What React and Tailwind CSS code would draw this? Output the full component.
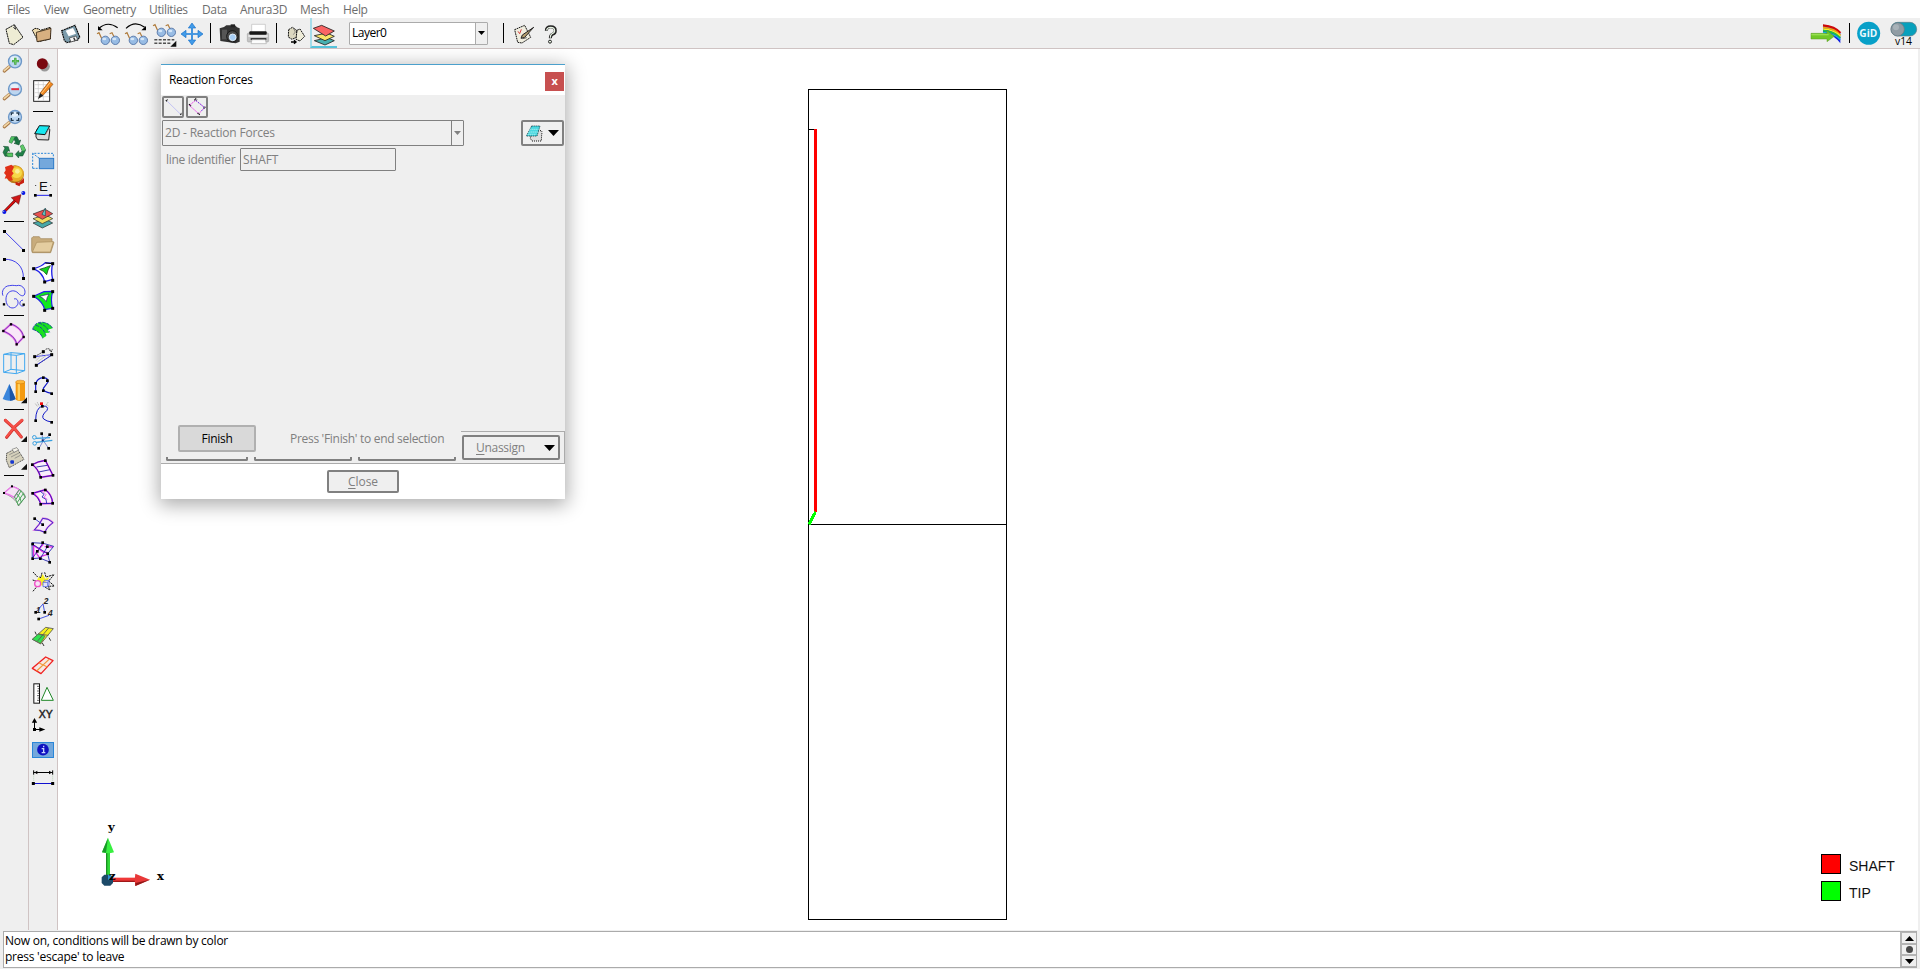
import React from "react";

/* Icon artwork is drawn on a grid with three units per pixel. */
function Cell({ ox = 0, oy = 0, x, y, w = 28, h = 28, children }) {
  return (
    <svg
      width={w}
      height={h}
      viewBox={`${(x - ox) * 3} ${(y - oy) * 3} ${w * 3} ${h * 3}`}
      className="block shrink-0"
      fill="none"
    >
      {children}
    </svg>
  );
}

const Dots = ({ p, s = 8, c = "#000" }) => (
  <>
    {p.map(([x, y], i) => (
      <rect key={i} x={x - s / 2} y={y - s / 2} width={s} height={s} fill={c} />
    ))}
  </>
);

const HRule = ({ className }) => (
  <div className={`flex shrink-0 items-start justify-center ${className}`}>
    <div className="h-px w-5 bg-black" />
  </div>
);
const VRule = ({ className = "" }) => <div className={`h-5 w-px shrink-0 bg-black ${className}`} />;

const BLUE = "#2020e8";

function Lens({ cy, children }) {
  return (
    <>
      <path d={`M13 ${cy + 29} L27 ${cy + 17}`} stroke="#a87848" strokeWidth="10" strokeLinecap="round" />
      <path d={`M13 ${cy + 28} L27 ${cy + 16}`} stroke="#f3d9a8" strokeWidth="5" strokeLinecap="round" />
      <circle cx="45" cy={cy} r="19.5" fill="#bcd6f0" stroke="#6d98c8" strokeWidth="4" />
      <ellipse cx="43" cy={cy - 8} rx="12" ry="7" fill="#e4f0fa" />
      {children}
    </>
  );
}

const Corner = ({ x, y }) => (
  <path d={`M${x} ${y} v-18 l-18 18z`} fill="#111" />
);

function LeftColumn() {
  return (
    <div className="flex w-7 shrink-0 flex-col bg-[#efefef]">
      <Cell oy={45} x={0} y={49}>
        <Lens cy={49}>
          <path d="M46 38v21M36 48.500h21" stroke="#3fa33f" strokeWidth="7" />
          <path d="M46 40v17M38 48.500h17" stroke="#7cd070" strokeWidth="2.500" />
        </Lens>
      </Cell>
      <Cell oy={45} x={0} y={77}>
        <Lens cy={132}><path d="M34 132.500h23" stroke="#e03040" strokeWidth="6" /></Lens>
      </Cell>
      <Cell oy={45} x={0} y={105}>
        <Lens cy={216}>
          <path d="M34 211v-7h7M49 204h7v7M56 219v7h-7M41 226h-7v-7" stroke="#20384f" strokeWidth="4" />
        </Lens>
      </Cell>
      <Cell oy={45} x={0} y={133}>
        <path d="M27 291l7-16h17l6 12 5-2-5 15-15-5 5-3-5-9-7 12z" fill="#187040" stroke="#0b4022" strokeWidth="1.500" />
        <path d="M27 291l7-16 10 1-9 19z" fill="#50c060" />
        <path d="M10 304l15 1 4 14-5-2-6 10 4 7h-7l-6-12 6-13z" fill="#208048" stroke="#0b4022" strokeWidth="1.500" />
        <path d="M18 324h20v11H23z" fill="#58c860" stroke="#0b4022" strokeWidth="1.500" />
        <path d="M61 303l8-4 8 16-9 18H56v6l-10-11 10-11v6h7l3-6z" fill="#208048" stroke="#0b4022" strokeWidth="1.500" />
        <path d="M61 303l8-4 8 16-10 3z" fill="#60c868" />
      </Cell>
      <Cell oy={45} x={0} y={161}>
        <circle cx="45" cy="388" r="27" fill="#b87818" />
        <circle cx="47" cy="386" r="24" fill="#e8b028" />
        <circle cx="50" cy="383" r="16" fill="#f6d848" />
        <circle cx="52" cy="379" r="7" fill="#fbee98" />
        <path d="M15 366l19-7 8 6-6 14 5 6-7 9 5 12-11 1-7-7-7 1 4-10-6-7 5-8z" fill="#e03018" />
        <path d="M46 410l10 4 16-15 0 14-12 6-1 5-12-5z" fill="#c82010" />
      </Cell>
      <Cell oy={45} x={0} y={189}>
        <path d="M13 500L50 462" stroke="#500" strokeWidth="8" />
        <path d="M13 500L50 462" stroke="#e01010" strokeWidth="5" />
        <path d="M63 449l-7 29-22-20z" fill="#d01818" stroke="#500" strokeWidth="1.500" />
        <circle cx="13" cy="501" r="6" fill="#0818e8" /><circle cx="70" cy="444" r="6" fill="#0818e8" />
        <circle cx="11" cy="499" r="2" fill="#9ac" /><circle cx="68" cy="442" r="2" fill="#9ac" />
      </Cell>
      <HRule className="h-[9px] pt-1" />
      <Cell oy={225} x={0} y={226}>
        <path d="M13 19L71 76" stroke={BLUE} strokeWidth="2.500" />
        <Dots p={[[13.5, 19.5], [70.500, 76.500]]} s={9} />
      </Cell>
      <Cell oy={225} x={0} y={254}>
        <path d="M13 103C46 101 72 124 70 160" stroke={BLUE} strokeWidth="2.500" />
        <Dots p={[[13.5, 103.500], [70.500, 160.500]]} s={9} />
      </Cell>
      <Cell oy={225} x={0} y={282}>
        <path d="M9 212C3 200 12 183 28 182C40 179 50 184 55 181C70 181 78 196 74 207C70 217 60 211 54 204C44 194 29 196 22 207C15 219 17 237 27 245C38 254 52 246 54 235C55 225 49 219 42 222M69 225C56 226 56 246 71 243" stroke={BLUE} strokeWidth="2.500" />
        <Dots p={[[12, 238]]} s={7} /><Dots p={[[71, 239]]} s={7} />
      </Cell>
      <HRule className="h-[10px] pt-[5px]" />
      <Cell oy={225} x={0} y={320}>
        <path d="M10 318L33 297C50 303 66 314 71 336L50 358C47 338 30 327 10 318Z" stroke="#f06ae8" strokeWidth="6" fill="#f8e8f8" />
        <path d="M10 318L33 297C50 303 66 314 71 336L50 358C47 338 30 327 10 318Z" stroke="#3030a0" strokeWidth="2" />
        <Dots p={[[10, 318], [33, 298], [71, 336], [50, 358]]} s={7} />
      </Cell>
      <Cell oy={225} x={0} y={348} h={29}>
        <path d="M11 388L49 391V446L11 442ZM33 383L74 386V437L33 433ZM11 388L33 383M49 391L74 386M49 446L74 437M11 442L33 433" stroke="#40a8f0" strokeWidth="3" />
      </Cell>
      <Cell oy={225} x={0} y={377}>
        <path d="M28 477L47 522Q28 532 8 522Z" fill="#3a86dc" />
        <path d="M28 477L47 522Q38 528 30 527Z" fill="#1b56a8" />
        <path d="M47 471v53q14 8 28 0v-53z" fill="#f49a10" />
        <path d="M53 472v54h7v-54z" fill="#ffd060" />
        <ellipse cx="61" cy="471" rx="14" ry="5.500" fill="#ffb838" stroke="#c87408" strokeWidth="1.500" />
        <Corner x={81} y={535} />
      </Cell>
      <HRule className="h-[9px] pt-1" />
      <Cell oy={400} x={0} y={414} h={29}>
        <path d="M16 61L41 84 66 61M64 111L42 84 20 112" stroke="#c82020" strokeWidth="9" strokeLinecap="round" strokeLinejoin="round" />
        <path d="M16 60L41 82 66 60M63 110L42 83 20 110" stroke="#f45048" strokeWidth="7" strokeLinecap="round" />
        <Corner x={81} y={126} />
      </Cell>
      <Cell oy={400} x={0} y={443}>
        <path d="M20 160l30-16 22 34-44 25-9-22z" fill="#d5d0bb" stroke="#333" strokeWidth="2.500" strokeDasharray="4 2" />
        <path d="M28 164l22-11M33 171l24-12M44 175l17-9" stroke="#777" strokeWidth="2" />
        <path d="M36 148l14-5 6 7-14 7z" stroke="#777" strokeWidth="2" fill="#f4f2e8" />
        <rect x="31" y="181" width="11" height="10" rx="3" fill="#1838d0" />
        <Corner x={81} y={209} />
      </Cell>
      <HRule className="h-[9px] pt-1" />
      <Cell oy={400} x={0} y={480} h={32}>
        <path d="M12 279L36 259C54 264 72 274 76 290L56 318C50 300 30 287 12 279Z" stroke="#333" strokeWidth="1.500" />
        <path d="M12 279L36 259Q50 263 58 269L43 292Q30 284 12 279Z" stroke="#e878e8" strokeWidth="4" fill="#f4e4f4" />
        <path d="M43 290Q49 300 55 316L76 292Q68 276 58 269L43 290M50 281Q62 292 64 307M63 273L48 298M70 281L52 307" stroke="#48a858" strokeWidth="3" />
        <Dots p={[[12, 279], [36, 259]]} s={6} />
      </Cell>
    </div>
  );
}

function RightColumn() {
  return (
    <div className="flex w-7 shrink-0 flex-col bg-[#efefef]">
      <Cell oy={45} x={29} y={49}>
        <circle cx="134" cy="64" r="15.500" fill="#999" />
        <circle cx="127" cy="56" r="16.500" fill="#7a0810" />
      </Cell>
      <Cell oy={45} x={29} y={77} h={30}>
        <rect x="101" y="107" width="48" height="62" fill="#fff" stroke="#222" strokeWidth="3" />
        <path d="M104 119h43M104 131h43M104 143h43M104 155h43M115 109v58M130 109v58" stroke="#c9c9c9" strokeWidth="2" />
        <path d="M120 145l28-36 11 9-30 33z" fill="#f08820" stroke="#904808" strokeWidth="2" />
        <path d="M124 146l27-34" stroke="#ffc880" strokeWidth="3" />
        <path d="M120 144l10 8-16 10z" fill="#222" />
      </Cell>
      <HRule className="h-[9px] pt-1" />
      <Cell oy={45} x={29} y={116} h={34}>
        <path d="M112 252L147 251Q151 252 149 258L146 285 113 284 108 276V266Z" fill="#dcdcdc" stroke="#222" strokeWidth="3" />
        <path d="M118 242L149 243 135 269 104 266Z" fill="#18e8f0" stroke="#111" strokeWidth="3" />
        <path d="M136 270L148 248" stroke="#888" strokeWidth="2" />
      </Cell>
      <Cell oy={45} x={29} y={150} h={24}>
        <path d="M98 370V325H160V337" stroke="#2b86d8" strokeWidth="3" strokeDasharray="6 4" />
        <path d="M98 370h18M98 325l20 15" stroke="#2b86d8" strokeWidth="3" strokeDasharray="6 3" />
        <rect x="118" y="340" width="43" height="31" fill="#74a8dc" stroke="#2b78c8" strokeWidth="3" />
      </Cell>
      <Cell oy={45} x={29} y={174} h={30}>
        <text x="130" y="438" fontSize="40" textAnchor="middle" fill="#111" fontFamily="Liberation Sans, sans-serif">E</text>
        <path d="M107 420v3M152 420v3" stroke="#333" strokeWidth="3" />
        <path d="M107 451H151" stroke={BLUE} strokeWidth="3" />
        <Dots p={[[106, 451], [152, 451]]} s={8} />
      </Cell>
      <Cell oy={45} x={29} y={204}>
        <path d="M99 534l37-12 22 12-31 15z" fill="#48a8a8" stroke="#222" strokeWidth="2" />
        <path d="M99 521l37-12 22 12-31 15z" fill="#f0dc60" stroke="#222" strokeWidth="2" />
        <path d="M99 507l37-14 22 13-31 17z" fill="#e85050" stroke="#222" strokeWidth="2" />
        <path d="M136 489v24l-10-5z" fill="#68c8c8" stroke="#1a4a50" strokeWidth="2" />
      </Cell>
      <Cell oy={225} x={29} y={232} h={27}>
        <path d="M95 77V39l4-4h19l4 6h34v9l6 2-10 31H97z" fill="#c8ac7c" stroke="#a08454" strokeWidth="2" />
        <path d="M97 81l13-29 50-2-9 31z" fill="#e4cda0" stroke="#a88c5c" strokeWidth="2" />
      </Cell>
      <Cell oy={225} x={29} y={259}>
        <path d="M101 131Q125 125 136 113L158 115Q152 139 158 163L134 170Q129 144 101 131Z" fill="#fff" stroke={BLUE} strokeWidth="4" />
        <path d="M119 133Q134 129 151 122Q143 134 140 149Q132 137 119 133Z" fill="#10d820" stroke="#1a5020" strokeWidth="2.500" />
        <path d="M136 114L158 116" stroke="#000" strokeWidth="3" />
        <Dots p={[[101, 131], [158, 116], [158, 166], [134, 171]]} s={9} />
      </Cell>
      <Cell oy={225} x={29} y={287}>
        <path d="M101 214L132 200 158 199Q151 224 158 250L134 254Q129 231 101 214Z" fill="#10e820" stroke={BLUE} strokeWidth="3.500" />
        <path d="M119 214L147 207Q140 218 139 230Q131 219 119 214Z" fill="#fff" stroke="#1a2060" strokeWidth="2" />
        <Dots p={[[101, 214], [158, 200], [158, 250], [134, 256]]} s={9} />
      </Cell>
      <Cell oy={225} x={29} y={315}>
        <path d="M98 313Q105 290 129 292Q151 296 158 310L143 314 148 323 136 324 138 334 128 340Q122 322 98 313Z" fill="#18e020" />
        <path d="M98 313Q104 290 129 292Q149 295 158 310M98 313Q122 321 128 340M107 301Q130 306 138 332M117 294Q139 301 149 322" stroke="#1038a0" strokeWidth="2.500" strokeDasharray="10 3" />
      </Cell>
      <Cell oy={225} x={29} y={343}>
        <path d="M104 395L130 380M156 390L109 421" stroke="#333" strokeWidth="2.500" strokeDasharray="6 2" />
        <path d="M110 420L155 390M104 395L155 389" stroke={BLUE} strokeWidth="2.500" />
        <path d="M108 407l22-22M112 411l30-22" stroke="#bbb" strokeWidth="2.500" />
        <path d="M137 373Q149 367 154 380M148 376l6 5 3-8" stroke="#111" strokeWidth="2.500" strokeDasharray="5 2" />
        <Dots p={[[104, 395], [130, 380], [155, 389], [109, 421]]} s={9} />
      </Cell>
      <Cell oy={225} x={29} y={371}>
        <path d="M107 499V478Q111 459 130 458Q147 460 144 471L130 490Q128 500 154 505" stroke="#1018c8" strokeWidth="3.500" />
        <Dots p={[[107, 500], [107, 475], [130, 458], [142, 467], [130, 497], [155, 506]]} s={8} />
      </Cell>
      <Cell oy={400} x={29} y={399}>
        <path d="M107 61Q107 24 127 18Q148 18 141 31Q122 48 131 57Q140 64 154 66" stroke="#1018c8" strokeWidth="3" />
        <path d="M106 11l7 9M112 7l6 12M136 19l8-12M141 14l5 5" stroke="#aaa" strokeWidth="3" strokeDasharray="4 2" />
        <rect x="120" y="7" width="9" height="8" fill="#f01010" />
        <Dots p={[[127, 19], [107, 62], [155, 67]]} s={8} />
      </Cell>
      <Cell oy={400} x={29} y={427}>
        <path d="M125 101L130 122 117 145M150 103L130 122 146 145" stroke="#4858c0" strokeWidth="2" />
        <path d="M157 121L108 127M150 113L108 115" stroke="#38a0e0" strokeWidth="4" />
        <circle cx="103" cy="112" r="5.500" stroke="#38a0e0" strokeWidth="3" /><circle cx="104" cy="130" r="5.500" stroke="#38a0e0" strokeWidth="3" />
        <Dots p={[[125, 101], [149, 104], [116, 145], [146, 145]]} s={8} />
        <Dots p={[[128, 121]]} s={6} c="#103080" />
      </Cell>
      <Cell oy={400} x={29} y={455}>
        <path d="M97 194Q113 184 136 181L159 226 122 232Q113 204 97 194Z" fill="#f8f0fa" stroke="#e828e0" strokeWidth="5" />
        <path d="M97 194Q113 184 136 181L159 226 122 232Q113 204 97 194ZM109 201L142 196M116 216L150 209" stroke="#1818a0" strokeWidth="2.500" />
        <Dots p={[[97, 194], [136, 182], [159, 226], [122, 232]]} s={8} />
      </Cell>
      <Cell oy={400} x={29} y={483}>
        <path d="M98 280L136 269Q156 284 158 310L122 311Q116 290 98 280Z" fill="#f8f0fa" stroke="#e828e0" strokeWidth="5" />
        <path d="M98 280L136 269Q156 284 158 310L122 311Q116 290 98 280ZM120 273l12 10-6 8 12 7 2 12" stroke="#1818b0" strokeWidth="2.500" />
        <path d="M126 272l12 12-6 8 10 6" stroke="#e828e0" strokeWidth="2" />
        <Dots p={[[98, 280], [136, 270], [158, 310], [122, 313]]} s={8} />
      </Cell>
      <Cell oy={400} x={29} y={511}>
        <path d="M128 355Q145 354 159 368Q141 380 134 397Q120 389 103 390Q118 375 128 355Z" fill="#f4eef8" stroke="#e870e0" strokeWidth="5" />
        <path d="M128 355Q145 354 159 368Q141 380 134 397Q120 389 103 390Q118 375 128 355ZM103 355L128 374" stroke="#2020c8" strokeWidth="2.500" />
        <Dots p={[[104, 356], [128, 374], [135, 397]]} s={8} />
      </Cell>
      <Cell oy={400} x={29} y={539}>
        <path d="M99 434L128 432 157 440 143 458 147 483 119 473 99 473Z" fill="#f4eef8" />
        <path d="M98 434L130 456 143 458M130 432L108 458 119 474M101 434V472M134 440L159 441M121 470L143 463" stroke="#e030e0" strokeWidth="4" />
        <path d="M96 428L130 430 161 439 143 461 149 486 119 474 97 476ZM96 432L143 461M128 430L112 455 97 474M121 476L142 440" stroke="#1818b0" strokeWidth="2.500" />
        <Dots p={[[98, 432], [128, 428], [142, 440], [143, 461], [121, 476], [98, 476], [112, 454], [149, 487]]} s={8} />
      </Cell>
      <Cell oy={560} x={29} y={567}>
        <path d="M115 52l7 2 6-12 8 14 12-4-8 14 2 12-22-2-10-12z" fill="#f8f020" />
        <path d="M99 36l14 15M126 38l-3 12M134 37l4 14 24-7-16 19 17 15-18 1 5 11-16-9M113 77l-15 18M98 60l10 3M118 51l5 2" stroke="#111" strokeWidth="3" strokeDasharray="6 2" />
        <circle cx="113" cy="71" r="9" fill="#f6e4f4" stroke="#f050c8" strokeWidth="4" />
        <path d="M129 67h14v13h-14zM133 61h14v14M129 67l5-6M143 67l4-6M143 80l4-5" stroke="#5868e0" strokeWidth="2.500" fill="#e0e4fa" />
      </Cell>
      <Cell oy={560} x={29} y={595}>
        <path d="M107 157L129 132M129 131L134 157M116 177L147 166" stroke="#4858e0" strokeWidth="3" />
        <g fill="#222" fontFamily="Liberation Sans, sans-serif" fontWeight="700" fontStyle="italic" fontSize="25">
          <text x="131" y="131">2</text><text x="108" y="158">1</text><text x="144" y="168">4</text>
        </g>
        <Dots p={[[107, 157], [134, 157], [116, 177]]} s={8} />
      </Cell>
      <Cell oy={560} x={29} y={623}>
        <path d="M97 238L137 202 160 206 122 252Z" fill="#f4f020" stroke="#555" strokeWidth="2.500" />
        <path d="M97 238L115 222 135 228 122 250Z" fill="#30e050" stroke="#555" strokeWidth="2" />
        <path d="M115 222L145 226M146 204L112 244" stroke="#555" strokeWidth="2.500" />
        <path d="M105 215l4 9M127 249l5 9M147 233l5 9" stroke="#333" strokeWidth="3" />
      </Cell>
      <Cell oy={560} x={29} y={651}>
        <path d="M97 325L137 291 159 302 123 341Z" fill="#f6e8e4" stroke="#f02020" strokeWidth="4" strokeLinejoin="round" />
        <path d="M116 308L142 321M147 298L110 333" stroke="#f09838" strokeWidth="3.500" />
      </Cell>
      <Cell oy={560} x={29} y={679}>
        <rect x="101.500" y="371.500" width="17" height="58" fill="#fff" stroke="#111" strokeWidth="3" />
        <path d="M111 379h8M113 386h6M111 393h8M113 400h6M111 407h8M113 414h6M111 421h8" stroke="#111" strokeWidth="2" />
        <path d="M141 382L160 421H124Z" fill="#fff" stroke="#208828" strokeWidth="3" />
      </Cell>
      <Cell oy={560} x={29} y={707}>
        <text x="116" y="474" fontSize="30" textLength="42" lengthAdjust="spacingAndGlyphs" fill="#222" stroke="#222" strokeWidth="1.400" fontFamily="Liberation Sans, sans-serif">XY</text>
        <path d="M103.500 508V485M103 508.500H122" stroke="#000" strokeWidth="3" />
        <path d="M103.500 474l8 14h-16zM136 508.500l-18-7v14zM99 504h9v9h-9z" fill="#000" />
      </Cell>
      <Cell oy={560} x={29} y={735}>
        <rect x="97.500" y="547.500" width="63" height="45" fill="#74a8dc" stroke="#2b86d8" strokeWidth="3" />
        <circle cx="129" cy="569" r="17.500" fill="#0f10c0" />
        <path d="M125 566h6v11M125 578h11M131 557v5" stroke="#c8d4ff" strokeWidth="4" />
      </Cell>
      <Cell oy={560} x={29} y={763}>
        <path d="M101 637.500H158M101 631v13M158 631v13" stroke="#000" strokeWidth="3" />
        <path d="M103 637.500l9-5v10zM156 637.500l-9-5v10z" fill="#000" />
        <path d="M101 647v18M158 647v18" stroke="#9cc49c" strokeWidth="2" strokeDasharray="3 3" />
        <path d="M101 670.500H158" stroke="#1010d0" strokeWidth="3" />
        <Dots p={[[100, 670.500], [158, 670.500]]} s={9} />
      </Cell>
    </div>
  );
}

const Glasses = ({ x, y }) => (
  <g>
    <path d={`M${x} ${y - 20}l6-3 10 22M${x + 38} ${y - 20}l7-3 11 22`} stroke="#b07c3c" strokeWidth="3.500" />
    <circle cx={x + 25} cy={y} r="12.500" fill="#98bce4" stroke="#5c7cac" strokeWidth="3" />
    <circle cx={x + 55} cy={y} r="12.500" fill="#98bce4" stroke="#5c7cac" strokeWidth="3" />
    <ellipse cx={x + 22} cy={y - 4} rx="6" ry="4" fill="#d4e6f8" /><ellipse cx={x + 52} cy={y - 4} rx="6" ry="4" fill="#d4e6f8" />
  </g>
);

const LayerSheets = () => (
  <>
    <path d="M103 122l38-9 22 9-28 13z" fill="#48b0b0" stroke="#222" strokeWidth="2.500" strokeLinejoin="round" />
    <path d="M103 107l38-8 22 10-28 13z" fill="#f8e468" stroke="#222" strokeWidth="2.500" strokeLinejoin="round" />
    <path d="M100 85l25-9 38 17-26 15z" fill="#fa6464" stroke="#222" strokeWidth="2.500" strokeLinejoin="round" />
  </>
);

function Toolbar() {
  return (
    <div className="flex h-[30px] shrink-0 items-center bg-[#efefef]">
      <Cell x={0} y={18} w={28} h={30}>
        <path d="M18 88l25-14 26 38-28 22-13-4z" fill="#eeecd4" stroke="#111" strokeWidth="3" strokeDasharray="6 1.500" />
        <path d="M43 74l4 14-7-6" stroke="#333" strokeWidth="3" fill="#fff" />
      </Cell>
      <Cell x={28} y={18} w={28} h={30}>
        <path d="M97 91l8-6 12 2 4 4 30-9v35l-36 8z" fill="#f0dcae" stroke="#111" strokeWidth="3" strokeDasharray="6 1.500" />
        <path d="M109 97l44-12-2 32-40 8z" fill="#d8b080" stroke="#302010" strokeWidth="2.500" />
      </Cell>
      <Cell x={56} y={18} w={31} h={30}>
        <path d="M185 92l40-16 14 35-6 9-33 8-7-7z" fill="#7c9cac" stroke="#111" strokeWidth="3.500" strokeDasharray="6 1.500" />
        <path d="M197 92l22-8 9 17-22 8z" fill="#fff" /><path d="M208 114l20-6 5 11-20 7z" fill="#f6f6f6" stroke="#333" strokeWidth="2" />
        <path d="M221 113l4 8" stroke="#333" strokeWidth="4" />
      </Cell>
      <VRule className="ml-px" />
      <Cell x={89} y={18} w={34} h={30}>
        <g transform="translate(4 0)">
          <Glasses x={287} y={121} />
          <path d="M292 86Q318 61 349 83" stroke="#000" strokeWidth="3.500" /><path d="M290 78v13h14z" fill="#000" />
        </g>
      </Cell>
      <Cell x={123} y={18} w={28} h={30}>
        <Glasses x={375} y={121} />
        <path d="M378 85Q405 60 434 82" stroke="#000" strokeWidth="3.500" /><path d="M438 78v13h-14z" fill="#000" />
      </Cell>
      <Cell x={151} y={18} w={28} h={30}>
        <Glasses x={459} y={97} />
        <path d="M463 119.500h60M463 129.500h50" stroke="#000" strokeWidth="3" strokeDasharray="9 4" />
        <Corner x={529} y={140} />
      </Cell>
      <Cell x={179} y={18} w={31} h={30}>
        <path d="M576 78V126M552 102H600" stroke="#1870c8" strokeWidth="5" />
        <path d="M576 69l11 15h-22zM576 135l11-15h-22zM543 102l15-11v22zM609 102l-15-11v22z" fill="#409ae8" stroke="#1870c8" strokeWidth="2" />
        <path d="M576 80V124M554 102H598" stroke="#50a8f0" strokeWidth="2.500" />
      </Cell>
      <VRule />
      <Cell x={211} y={18} w={34} h={30}>
        <path d="M659 85l13-4 7-5h26l6 6 8 3v40l-12 5-46-7z" fill="#333" />
        <path d="M692 73h13v9h-13z" fill="#222" /><path d="M666 89h15v29h-15z" fill="#555" />
        <circle cx="697" cy="109" r="17" fill="#4a4a4a" stroke="#171717" strokeWidth="3" />
        <circle cx="698" cy="112" r="10" fill="#a6cdf4" stroke="#e0eefa" strokeWidth="3" />
      </Cell>
      <Cell x={245} y={18} w={31} h={30}>
        <path d="M755 73h41v27h-41z" fill="#fff" stroke="#bbb" strokeWidth="2" />
        <rect x="742" y="99" width="64" height="27" rx="4" fill="#c4c4c4" stroke="#999" strokeWidth="1.500" />
        <rect x="748" y="94" width="52" height="10" rx="3" fill="#181818" />
        <path d="M745 108h58" stroke="#f8f8f8" strokeWidth="4" />
        <path d="M752 117h47" stroke="#222" strokeWidth="5" /><path d="M756 119h40l3 12h-46z" fill="#fcfcfc" stroke="#aaa" strokeWidth="2" />
      </Cell>
      <VRule />
      <Cell ox={280} x={277} y={18} w={33} h={30}>
        <path d="M26 89l11-7 12 8 2 21-15 7-11-7z" fill="#dcd8c0" stroke="#111" strokeWidth="3" strokeDasharray="6 2" />
        <path d="M51 91l9-4 14 22-14 14-12-5z" fill="#efedda" stroke="#111" strokeWidth="3" strokeDasharray="6 2" />
        <path d="M33 126h13M42 121l6 5-6 5" stroke="#000" strokeWidth="4" />
        <path d="M40 84l6 12-6 8" stroke="#666" strokeWidth="2" />
      </Cell>
      <div className="flex h-[30px] w-[27px] shrink-0 border-b-2 border-l-2 border-b-[#56c4dc] border-l-[#a4dcea]">
        <svg width="25" height="28" viewBox="96 54 75 84" fill="none"><LayerSheets /></svg>
      </div>
      <div className="ml-3 flex h-[23px] w-[139px] shrink-0 rounded-[1px] border border-[#ababab] bg-white">
        <div className="flex flex-1 items-center pl-0.5 text-[12px] leading-none tracking-[-0.5px] text-black">Layer0</div>
        <div className="flex w-3 items-center justify-center border-l border-[#ababab] bg-[#efefef]">
          <svg width="7" height="4" viewBox="0 0 7 4"><path d="M0 0h7L3.500 4z" fill="#000" /></svg>
        </div>
      </div>
      <VRule className="ml-[15px]" />
      <Cell ox={280} x={504} y={18} w={37} h={30}>
        <path d="M704 89l30-13 18 36-26 17-13-2z" fill="#f0eee0" stroke="#111" strokeWidth="3" strokeDasharray="5 2" />
        <path d="M714 94l5 7 5-13" stroke="#d84040" strokeWidth="3" />
        <path d="M727 105l34-23-27 30-11 3z" fill="#b8a070" stroke="#222" strokeWidth="3" />
        <path d="M727 116l13-3" stroke="#555" strokeWidth="3" />
      </Cell>
      <Cell ox={280} x={541} y={18} w={20} h={30}>
        <path d="M799 92q0-12 13-12 14 0 14 12 0 8-9 11-6 3-6 12" stroke="#222" strokeWidth="9" />
        <path d="M800 91q1-9 12-9 12 0 12 10 0 6-9 10-4 3-4 11" stroke="#e8f4e4" strokeWidth="3.500" />
        <circle cx="810" cy="125" r="4.500" fill="#e8f4e4" stroke="#222" strokeWidth="3" />
      </Cell>
      <div className="flex-1" />
      <Cell ox={1740} x={1808} y={18} w={41} h={30}>
        <path d="M249 74Q285 77 301 98V130Q285 106 249 98Z" fill="#1020e0" />
        <path d="M249 76Q285 79 301 99" stroke="#d00808" strokeWidth="7" />
        <path d="M249 82Q285 85 301 105" stroke="#f8a008" strokeWidth="5" />
        <path d="M249 87Q285 90 301 109" stroke="#f8f020" strokeWidth="5" />
        <path d="M249 92Q285 95 301 114" stroke="#20c840" strokeWidth="5" />
        <path d="M249 97Q285 100 301 119" stroke="#18b8e8" strokeWidth="4" />
        <path d="M213 100h48v-8l22 17-22 16v-8h-48z" fill="#70c828" stroke="#589820" strokeWidth="1.500" />
        <path d="M214 104h52" stroke="#98e050" strokeWidth="4" />
      </Cell>
      <VRule />
      <Cell ox={1740} x={1850} y={18} w={36} h={30}>
        <circle cx="386" cy="100" r="34.500" fill="#08a0c8" />
        <text x="358" y="111" fontSize="30" fontWeight="700" textLength="54" lengthAdjust="spacingAndGlyphs" fill="#e8f8fc" fontFamily="Open Sans, sans-serif">GiD</text>
      </Cell>
      <Cell ox={1740} x={1886} y={18} w={34} h={30}>
        <rect x="453" y="67" width="77" height="41" rx="20" fill="#08a0bc" stroke="#5a7c88" strokeWidth="2" />
        <circle cx="473" cy="88" r="20" fill="#909ca4" stroke="#68747c" strokeWidth="2" />
        <circle cx="468" cy="82" r="9" fill="#a8b2b8" />
        <text x="465" y="135" fontSize="34" textLength="51" lengthAdjust="spacingAndGlyphs" fill="#000" fontFamily="Open Sans, sans-serif">v14</text>
      </Cell>
    </div>
  );
}

const Stub = ({ className }) => (
  <div className={`h-[4px] rounded-b-[2px] border-2 border-t-0 border-[#808080] ${className}`} />
);

function ReactionForcesDialog() {
  return (
    <div className="absolute left-[103px] top-[15px] flex h-[435px] w-[404px] flex-col border-t border-[#4ba0cc] bg-white text-[12px] leading-none tracking-[-0.3px] text-[#808080] shadow-[0_4px_18px_2px_rgba(0,0,0,0.33)]">
      <div className="flex h-[30px] shrink-0 items-start justify-between pl-2 pr-px pt-[7px]">
        <span className="pt-[2px] text-black">Reaction Forces</span>
        <div className="flex h-[19px] w-[19px] items-center justify-center bg-[#c75050] pb-[2px] text-[11px] font-bold text-white">x</div>
      </div>
      <div className="flex h-[369px] shrink-0 flex-col border-b border-[#ababab] bg-[#efefef] pl-px pt-px">
        <div className="flex gap-[2px]">
          <div className="h-[22px] w-[22px] rounded-[2px] border-2 border-[#808080]">
            <svg width="18" height="18" viewBox="0 0 54 54">
              <path d="M10 10L50 49" stroke="#c4c4f4" strokeWidth="3" />
              <path d="M6 9l5-4M49 50l5-4" stroke="#000" strokeWidth="5" strokeDasharray="3 2" />
            </svg>
          </div>
          <div className="h-[22px] w-[22px] rounded-[2px] border-2 border-[#808080]">
            <svg width="18" height="18" viewBox="0 0 54 54" fill="none">
              <path d="M4 22L23 7 50 29 32 47Z" stroke="#ec50ec" strokeWidth="3" strokeDasharray="6 2" />
              <path d="M23 7L50 29 40 39" stroke="#4848d8" strokeWidth="2.500" strokeDasharray="5 4" />
              <path d="M3 19l6 5M19 7l4-4 4 4M47 31l5-5M29 45l6 5" stroke="#000" strokeWidth="4" strokeDasharray="3 2" />
            </svg>
          </div>
        </div>
        <div className="mt-[2px] flex justify-between pr-px">
          <div className="flex h-[26px] w-[302px] rounded-[1px] border border-[#808080]">
            <div className="flex flex-1 items-center pl-[2px] tracking-[-0.2px]">2D - Reaction Forces</div>
            <div className="flex w-[12px] items-center justify-center border-l border-[#808080]">
              <svg width="7" height="4" viewBox="0 0 7 4"><path d="M0 0h7L3.500 4z" fill="#808080" /></svg>
            </div>
          </div>
          <div className="flex h-[26px] w-[43px] items-center rounded-[2px] border-2 border-[#808080] pl-[3px]">
            <svg width="17" height="17" viewBox="0 0 51 51" fill="none">
              <path d="M18 17H46Q49 20 47 28L46 48H18L13 40Z" fill="#ddd" stroke="#111" strokeWidth="3" strokeDasharray="3 3" />
              <path d="M17 3H42L33 33H1Z" fill="#48d8e0" stroke="#083840" strokeWidth="3" strokeDasharray="3 3" />
              <path d="M11 13h26M8 21h27M5 28h25" stroke="#c8f4f4" strokeWidth="3" strokeDasharray="3 3" />
            </svg>
            <svg width="11" height="6" viewBox="0 0 11 6" className="ml-[5px]"><path d="M0 0h11L5.500 6z" fill="#000" /></svg>
          </div>
        </div>
        <div className="mt-[2px] flex items-center pl-1">
          <span className="w-[74px] whitespace-nowrap">line identifier</span>
          <div className="flex h-[23px] w-[156px] items-center rounded-[1px] border border-[#808080] pl-[2px] tracking-[-0.1px]">SHAFT</div>
        </div>
        <div className="flex-1" />
        <div className="flex h-[38px] items-start">
          <div className="ml-4 flex h-[27px] w-[78px] items-center justify-center rounded-[2px] border-2 border-[#b0b0b0] bg-[#d9d9d9] text-black">Finish</div>
          <span className="ml-[34px] w-[171px] whitespace-nowrap pt-2">Press 'Finish' to end selection</span>
          <div className="mt-[6px] flex h-[32px] w-[104px] border-r border-t border-[#ababab] pl-px pt-[3px]">
            <div className="flex h-[25px] w-[98px] items-center justify-between rounded-[2px] border-2 border-[#808080] pl-3 pr-[3px]">
              <span><span className="underline underline-offset-2">U</span>nassign</span>
              <svg width="11" height="6" viewBox="0 0 11 6"><path d="M0 0h11L5.500 6z" fill="#000" /></svg>
            </div>
          </div>
        </div>
        <div className="-mt-[6px] mb-[2px] flex pl-1">
          <Stub className="w-[82px]" /><Stub className="ml-[6px] w-[98px]" /><Stub className="ml-[6px] w-[98px]" />
        </div>
      </div>
      <div className="flex flex-1 items-start justify-center pt-[6px]">
        <div className="flex h-[23px] w-[72px] items-center justify-center rounded-[2px] border-2 border-[#808080] bg-[#efefef] tracking-[-0.1px]">
          <span><span className="underline underline-offset-2">C</span>lose</span>
        </div>
      </div>
    </div>
  );
}

function Viewport() {
  return (
    <div className="relative flex-1 bg-white">
      <svg width="1860" height="881" viewBox="58 49 1860 881" className="block" fill="none">
        <g stroke="#000" strokeWidth="1" shapeRendering="crispEdges">
          <path d="M808.500 89.500H1006.500V919.500H808.500ZM808.500 524.500H1006.500M808.500 129.500H815" />
        </g>
        <path d="M814 129h3v383h-3z" fill="#f00" shapeRendering="crispEdges" />
        <path d="M815.500 512L809 524.500" stroke="#0f0" strokeWidth="3" shapeRendering="crispEdges" />
        <g transform="translate(0 800) scale(.33333)">
          <path d="M318 240V156h12v84z" fill="#30d838" /><path d="M318 240V156h4v84z" fill="#189020" />
          <path d="M324 113l18 44q-18 6-36 0z" fill="#38f040" /><path d="M324 113l-6 45-12-1z" fill="#189828" />
          <path d="M328 233H406v13H328z" fill="#f03838" /><path d="M328 242H406v4H328z" fill="#a01818" />
          <path d="M450 239l-44-18q-4 18 0 37z" fill="#e83838" /><path d="M450 239l-44 10v9z" fill="#901818" />
          <path d="M313 224h18l8 8v17l-8 8h-18l-8-8v-17z" fill="#1c4a68" />
          <path d="M324 224h7l8 8-15 8z" fill="#3090d0" />
        </g>
        <g fill="#000" fontFamily="DejaVu Serif, serif" fontWeight="700" fontSize="11.500">
          <text x="108" y="831">y</text><text x="157" y="880">x</text><text x="109" y="880">z</text>
        </g>
      </svg>
      <ReactionForcesDialog />
      <div className="absolute left-[1763px] top-[805px] flex flex-col gap-[7px] font-['Liberation_Sans',Arial,sans-serif] text-[14px] leading-none text-[#111]">
        <div className="flex items-center gap-2">
          <div className="h-5 w-5 border border-black bg-[#ff0000]" /><span className="pt-[3px]">SHAFT</span>
        </div>
        <div className="flex items-center gap-2">
          <div className="h-5 w-5 border border-black bg-[#00ff00]" /><span className="pt-[3px]">TIP</span>
        </div>
      </div>
    </div>
  );
}

const MENUS = [
  ["Files", "w-[37px]"], ["View", "w-[39px]"], ["Geometry", "w-[66px]"], ["Utilities", "w-[53px]"],
  ["Data", "w-[38px]"], ["Anura3D", "w-[60px]"], ["Mesh", "w-[43px]"], ["Help", "w-[40px]"],
];

export default function App() {
  return (
    <div className="flex h-[969px] w-[1920px] flex-col overflow-hidden bg-[#efefef] font-['Open_Sans',sans-serif]">
      <div className="flex h-[18px] shrink-0 items-center bg-white pl-[7px] text-[12px] leading-none tracking-[-0.35px] text-[#6d6d6d]">
        {MENUS.map(([label, width]) => (
          <span key={label} className={`shrink-0 whitespace-nowrap pt-px ${width}`}>{label}</span>
        ))}
      </div>
      <Toolbar />
      <div className="h-px shrink-0 bg-[#cfc3c3]" />
      <div className="flex h-[881px] shrink-0">
        <LeftColumn />
        <div className="w-px bg-[#cfc3c3]" />
        <RightColumn />
        <div className="w-px bg-[#cfc3c3]" />
        <Viewport />
        <div className="w-[2px] bg-[#efefef]" />
      </div>
      <div className="flex flex-1 pb-px pl-[3px] pr-[3px] pt-px">
        <div className="flex flex-1 border border-[#ababab] bg-white">
          <div className="flex-1 pl-px pt-px text-[12px] leading-[16px] tracking-[-0.24px] text-black">
            <div>Now on, conditions will be drawn by color</div>
            <div>press 'escape' to leave</div>
          </div>
          <div className="flex w-4 flex-col gap-[2px] bg-[#b4b4b4] py-px pl-[2px]">
            <div className="flex h-[10px] items-center justify-center bg-[#efefef]">
              <svg width="9" height="5" viewBox="0 0 9 5"><path d="M0 5h9L4.500 0z" fill="#000" /></svg>
            </div>
            <div className="flex h-[9px] items-center justify-center bg-[#efefef]"><div className="h-[7px] w-[7px] rounded-full bg-[#4a4a4a]" /></div>
            <div className="flex flex-1 items-center justify-center bg-[#efefef]">
              <svg width="9" height="5" viewBox="0 0 9 5"><path d="M0 0h9L4.500 5z" fill="#000" /></svg>
            </div>
          </div>
        </div>
      </div>
    </div>
  );
}
